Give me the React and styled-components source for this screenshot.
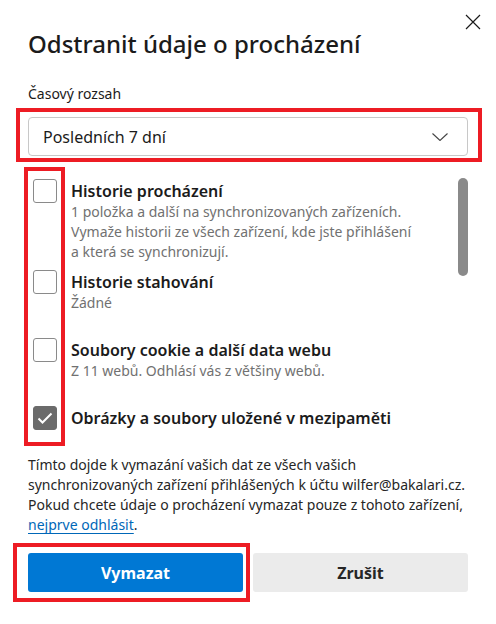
import React, { useState } from 'react';
import styled, { createGlobalStyle } from 'styled-components';

const GlobalStyle = createGlobalStyle`
  body {
    margin: 0;
    background: #ffffff;
    font-family: "Noto Sans", "Open Sans", sans-serif;
    color: #1b1b1b;
  }
  * { box-sizing: border-box; }
`;

const items = [
  {
    id: 'history',
    title: 'Historie procházení',
    desc: ['1 položka a další na synchronizovaných zařízeních.', 'Vymaže historii ze všech zařízení, kde jste přihlášení', 'a která se synchronizují.'],
    checked: false,
  },
  { id: 'downloads', title: 'Historie stahování', desc: ['Žádné'], checked: false },
  { id: 'cookies', title: 'Soubory cookie a další data webu', desc: ['Z 11 webů. Odhlásí vás z většiny webů.'], checked: false },
  { id: 'cache', title: 'Obrázky a soubory uložené v mezipaměti', desc: [], checked: true },
];

const App = () => {
  const [checks, setChecks] = useState(items.map((i) => i.checked));

  const toggle = (idx) => {
    setChecks(checks.map((c, i) => (i === idx ? !c : c)));
  };

  return <Dialog>
    <GlobalStyle />
    <Header>
      <Title>Odstranit údaje o procházení</Title>
      <CloseButton aria-label="Zavřít">
        <svg width="16" height="16" viewBox="0 0 16 16">
          <path d="M1 1 L15 15 M15 1 L1 15" stroke="#1b1b1b" strokeWidth="1.2" fill="none" />
        </svg>
      </CloseButton>
    </Header>

    <Label>Časový rozsah</Label>
    <Marked>
      <Select>
        <span>Posledních 7 dní</span>
        <svg width="16" height="8" viewBox="0 0 16 8">
          <path d="M0.5 0.5 L8 7.5 L15.5 0.5" stroke="#444" strokeWidth="1.1" fill="none" />
        </svg>
      </Select>
      <Annotation $top={-9} $left={-12} $right={-14} $bottom={-6} />
    </Marked>

    <ListWrap>
      <List>
        {items.map((item, i) => <Row key={item.id} onClick={() => toggle(i)}>
          <Check $checked={checks[i]}>
            {checks[i] && <svg width="16" height="12" viewBox="0 0 16 12">
              <path d="M1.5 6.5 L5.5 10.5 L14.5 1.5" stroke="#fff" strokeWidth="2" fill="none" />
            </svg>}
          </Check>
          <RowText>
            <RowTitle>{item.title}</RowTitle>
            {item.desc.map((line) => <RowDesc key={line}>{line}</RowDesc>)}
          </RowText>
        </Row>)}
      </List>
      <ScrollTrack>
        <Thumb />
      </ScrollTrack>
      <Annotation $top={-3} $left={-4} $width={41} $bottom={-16} />
    </ListWrap>

    <Info>
      Tímto dojde k vymazání vašich dat ze všech vašich<br />
      synchronizovaných zařízení přihlášených k účtu wilfer@bakalari.cz.<br />
      Pokud chcete údaje o procházení vymazat pouze z tohoto zařízení,<br />
      <Link href="#">nejprve odhlásit</Link>.
    </Info>

    <Buttons>
      <Marked>
        <Button $primary>Vymazat</Button>
        <Annotation $top={-10} $left={-15} $right={-7} $bottom={-10} />
      </Marked>
      <Button>Zrušit</Button>
    </Buttons>
  </Dialog>
}

const Dialog = styled.div`
  width: 496px;
  height: 624px;
  padding: 0 28px;
  background: #ffffff;
  display: flex;
  flex-direction: column;
  overflow: hidden;
`;

const Header = styled.div`
  display: flex;
  justify-content: space-between;
  align-items: flex-start;
  margin-right: -13px;
`;

const Title = styled.h1`
  margin: 28px 0 0;
  font-size: 24px;
  line-height: 32px;
  font-weight: 500;
  color: #1b1b1b;
`;

const CloseButton = styled.button`
  margin-top: 14px;
  width: 16px;
  height: 16px;
  padding: 0;
  border: none;
  background: none;
  display: flex;
`;

const Label = styled.div`
  margin: 24px 0 13px;
  font-size: 14px;
  line-height: 20px;
  color: #1b1b1b;
`;

const Marked = styled.div`
  position: relative;
`;

const Annotation = styled.div`
  position: absolute;
  top: ${(p) => p.$top}px;
  left: ${(p) => p.$left}px;
  bottom: ${(p) => p.$bottom}px;
  ${(p) => (p.$width ? `width: ${p.$width}px;` : `right: ${p.$right}px;`)}
  border: 4px solid #ed1c24;
  pointer-events: none;
`;

const Select = styled.div`
  height: 39px;
  border: 1px solid #c8c8c8;
  border-radius: 4px;
  display: flex;
  align-items: center;
  justify-content: space-between;
  padding: 0 19px 0 14px;
  font-size: 16px;
  color: #1b1b1b;
`;

const ListWrap = styled.div`
  position: relative;
  margin-top: 14px;
  height: 260px;
  display: grid;
  grid-template-columns: 1fr 10px;
`;

const List = styled.div`
  overflow: hidden;
  padding: 9px 0 0 5px;
`;

const Row = styled.div`
  display: flex;
  align-items: flex-start;
  gap: 14px;
  min-height: 60px;
  margin-bottom: 8px;
  cursor: pointer;
`;

const Check = styled.div`
  flex: 0 0 24px;
  width: 24px;
  height: 24px;
  border-radius: 3px;
  border: 1px solid ${(p) => (p.$checked ? '#6b6b6b' : '#8a8a8a')};
  background: ${(p) => (p.$checked ? '#6b6b6b' : '#fff')};
  display: flex;
  align-items: center;
  justify-content: center;
`;

const RowText = styled.div`
  display: flex;
  flex-direction: column;
  padding-top: 1px;
`;

const RowTitle = styled.div`
  font-size: 16px;
  line-height: 22px;
  font-weight: 600;
  color: #1b1b1b;
`;

const RowDesc = styled.div`
  font-size: 14px;
  line-height: 20px;
  color: #717171;
  white-space: nowrap;
`;

const ScrollTrack = styled.div`
  padding-top: 8px;
`;

const Thumb = styled.div`
  width: 10px;
  height: 98px;
  border-radius: 5px;
  background: #8a8a8a;
`;

const Info = styled.p`
  margin: 25px 0 0;
  font-size: 14px;
  line-height: 20px;
  color: #262626;
  white-space: nowrap;
`;

const Link = styled.a`
  color: #0067b8;
  text-decoration: underline;
  text-underline-offset: 3px;
`;

const Buttons = styled.div`
  margin-top: 18px;
  display: grid;
  grid-template-columns: 1fr 1fr;
  gap: 10px;
`;

const Button = styled.button`
  width: 100%;
  height: 39px;
  border: none;
  border-radius: 3px;
  font-family: "Noto Sans", "Open Sans", sans-serif;
  font-size: 16px;
  font-weight: 700;
  background: ${(p) => (p.$primary ? '#0078d4' : '#ebebeb')};
  color: ${(p) => (p.$primary ? '#ffffff' : '#262626')};
`;

export default App;
